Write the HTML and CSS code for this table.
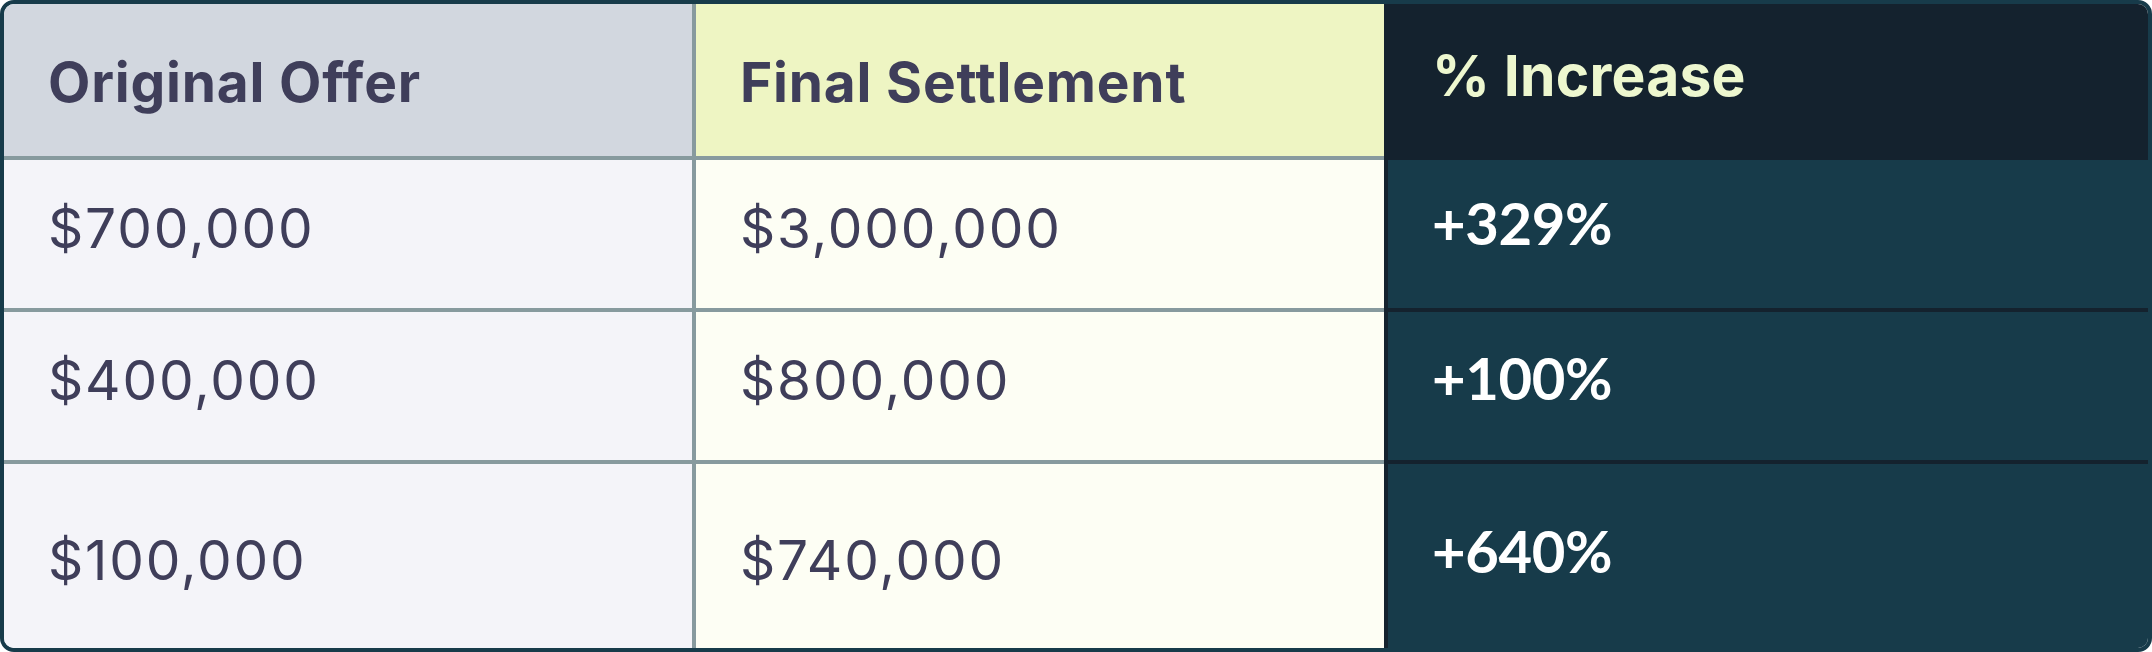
FILE: index.html
```html
<!DOCTYPE html>
<html lang="en">
<head>
<meta charset="utf-8">
<title>Settlement comparison</title>
<link rel="stylesheet" href="styles.css">
</head>
<body>
<div class="table">
  <div class="cell head c1 r-head"><span>Original Offer</span></div>
  <div class="cell head c2 r-head"><span>Final Settlement</span></div>
  <div class="cell head c3 r-head"><span>% Increase</span></div>

  <div class="cell body c1 r1"><span>$700,000</span></div>
  <div class="cell body c2 r1"><span>$3,000,000</span></div>
  <div class="cell body c3 r1"><span>+329%</span></div>

  <div class="cell body c1 r2"><span>$400,000</span></div>
  <div class="cell body c2 r2"><span>$800,000</span></div>
  <div class="cell body c3 r2"><span>+100%</span></div>

  <div class="cell body c1 r3 last"><span>$100,000</span></div>
  <div class="cell body c2 r3 last"><span>$740,000</span></div>
  <div class="cell body c3 r3 last"><span>+640%</span></div>
</div>
</body>
</html>
```

FILE: styles.css
```css
html, body {
  margin: 0;
  padding: 0;
  background: #ffffff;
}

.table {
  box-sizing: border-box;
  width: 2152px;
  height: 652px;
  border: 4px solid #173b4a;
  border-radius: 14px;
  overflow: hidden;
  display: grid;
  grid-template-columns: 688px 692px 764px;
  grid-template-rows: 156px 152px 152px 184px;
  font-family: "Inter", "Liberation Sans", sans-serif;
  color: #3f3e5a;
}

.cell {
  box-sizing: border-box;
  display: flex;
  align-items: center;
  padding-left: 44px;
  line-height: 1;
  border-bottom: 4px solid #879a9e;
  white-space: nowrap;
}

.cell.last {
  border-bottom: 0;
}

.c2 {
  border-left: 4px solid #879a9e;
}

.c3 {
  border-left: 4px solid #14222e;
  border-bottom-color: #14222e;
  padding-left: 44px;
}

/* header */
.head {
  font-weight: 700;
  font-size: 55px;
  letter-spacing: 0.8px;
  padding-top: 4px;
}

.head.c1 { background: #d2d7df; }
.head.c2 { background: #eef5c3; }
.head.c3 {
  background: #14222e;
  color: #edf7cf;
  font-size: 57px;
  letter-spacing: 0.2px;
  padding-top: 0;
  padding-bottom: 10px;
}

/* body */
.body {
  font-size: 55px;
  font-weight: 400;
  letter-spacing: 1.8px;
}

.body.c1 { background: #f4f4f9; }
.body.c2 { background: #fdfef4; }
.body.c3 {
  background: #173b4a;
  color: #ffffff;
  font-family: "Lato", "Liberation Sans", sans-serif;
  font-weight: 700;
  font-size: 58px;
  letter-spacing: -0.4px;
}

.r1, .r2 { padding-bottom: 12px; }
.r3 { padding-top: 8px; }

.body.c3.r1 { padding-bottom: 22px; }
.body.c3.r2 { padding-bottom: 16px; }
.body.c3.r3 { padding-top: 0; padding-bottom: 10px; }
```
